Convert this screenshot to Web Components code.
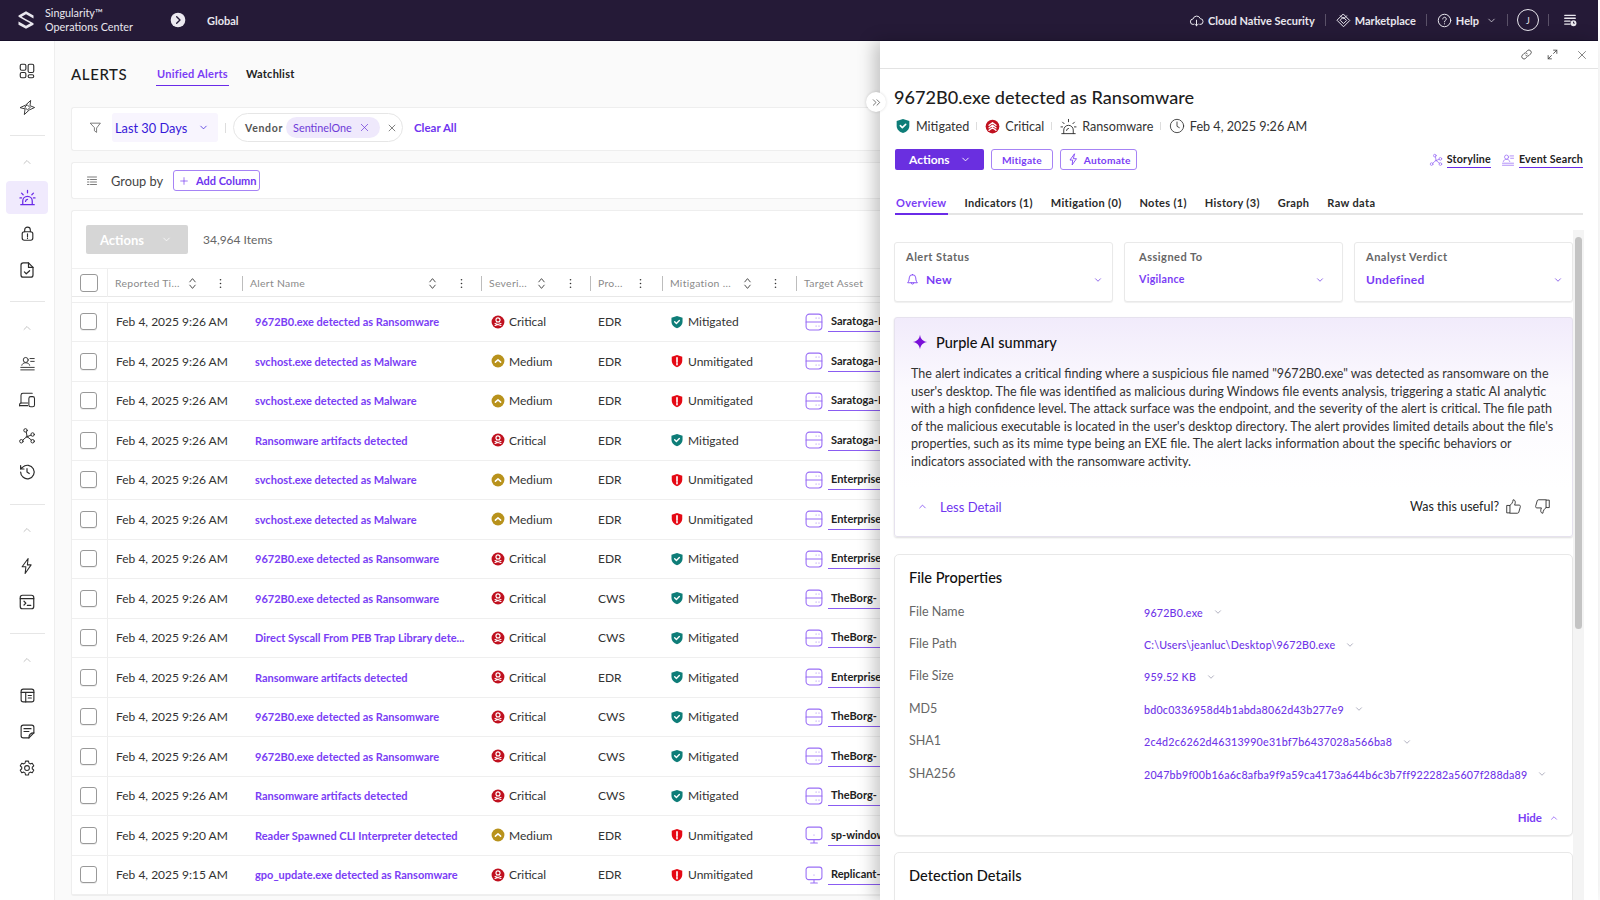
<!DOCTYPE html>
<html lang="en">
<head>
<meta charset="utf-8">
<title>Alerts</title>
<style>
    html, body { margin: 0; height: 100%; overflow: hidden; background: #fff; }
    body { font-family: Lato, "Liberation Sans", sans-serif; color: #2b2b2b; }
</style>
</head>
<body>
<app-shell></app-shell>

<script>
const ICONS = {
    logo: `<path fill="currentColor" stroke="none" d="M12 1.5 21 6.6v3.6L12 5.2 6.8 8.1 12 11l9 5v1.6l-9 5-9-5v-3.700l9 5 5.200-2.900L12 13.100 3 8.200V6.600z"/>`,
    dash: `<rect x="3" y="3" width="7.500" height="8" rx="2"/><rect x="13.500" y="3" width="7.500" height="11" rx="2"/><rect x="3" y="14" width="7.500" height="7" rx="2"/><rect x="13.500" y="17" width="7.500" height="4" rx="2"/>`,
    spark: `<path d="M2 12 9.500 8.500 16.500 2 15.500 9.500 22 12 14.500 15.500 7.500 22 8.500 14.500z"/><path d="M12 8.500 15.500 12 12 15.500 8.500 12z"/>`,
    alarm: `<path d="M3.500 21h17M6 21v-4.500a6 6 0 0 1 12 0V21"/><path d="M9.500 17a2.800 2.800 0 0 1 2.500-2.600M12 3v3M4.500 6.500 6.500 8.500M19.500 6.500 17.500 8.500M2.500 12.500h2M19.500 12.500h2"/>`,
    lock: `<rect x="4.500" y="9.500" width="15" height="12" rx="3"/><path d="M8 9.500V7a4 4 0 0 1 8 0v2.500M12 12.500v4M12 18.500v.5"/>`,
    filecheck: `<path d="M14 2.500H7a3 3 0 0 0-3 3v13a3 3 0 0 0 3 3h10a3 3 0 0 0 3-3V8.500z"/><path d="M14 2.500v6h6M8.500 14.500l2.500 2.500 4.500-4"/>`,
    events: `<circle cx="9.500" cy="7" r="3.500"/><path d="M4 14.500c.5-2.500 2.800-3.500 5.500-3.500s5 1 5.500 3.500M15.500 5h6M16.500 9h5M2.500 17.500h19M2.500 21h19"/>`,
    devices: `<path d="M4 16V5.500A2.500 2.500 0 0 1 6.500 3H19M2 19.500h11"/><path d="M2 19.500c0-2 .5-3.500 2-3.500h9"/><rect x="14.500" y="7.500" width="7.500" height="13.500" rx="2.500"/>`,
    graph: `<circle cx="10" cy="4.500" r="2.300"/><circle cx="4.500" cy="19" r="2.300"/><circle cx="19.500" cy="19" r="2.300"/><circle cx="19.500" cy="10" r="2.300"/><circle cx="12" cy="13" r="1"/><path d="M11 6.500l1 5.500M6.300 17.500 11 13.500M13 13.500l5 4M13 12.500l4.500-1.700"/>`,
    history: `<path d="M3.500 12a9 9 0 1 0 2.800-6.500L3.500 8M3.500 3.500V8H8M12 7.500V12l3 2"/>`,
    bolt: `<path d="M13.500 2 5.500 13h5l-1 9 8-11.500h-5z" stroke-linejoin="round"/>`,
    terminal: `<rect x="3" y="3" width="18" height="18" rx="3"/><path d="M3 7.500h18M8 11l2.500 2.500L8 16M12.500 16.500H17"/>`,
    panel: `<rect x="3" y="3" width="18" height="18" rx="3"/><path d="M3 7.500h18M9.500 7.500V21M13 12h4.500M13 15.500h4.500"/>`,
    note: `<path d="M21 14V6a3 3 0 0 0-3-3H6a3 3 0 0 0-3 3v12a3 3 0 0 0 3 3h8z"/><path d="M7 8h10M7 12h7M14 21c0-4 2-7 7-7"/>`,
    gear: `<circle cx="12" cy="12" r="3.200"/><path d="M10 2.800h4l.6 2.700 1.800 1 2.600-.8 2 3.400-2 1.900v2l2 1.900-2 3.400-2.600-.8-1.800 1-.6 2.700h-4l-.6-2.700-1.800-1-2.600.8-2-3.400 2-1.900v-2l-2-1.900 2-3.400 2.600.8 1.800-1z" stroke-linejoin="round"/>`,
    up: `<path d="M6 15l6-6 6 6"/>`,
    down: `<path d="M6 9l6 6 6-6"/>`,
    close: `<path d="M5 5l14 14M19 5 5 19"/>`,
    plus: `<path d="M12 4v16M4 12h16"/>`,
    funnel: `<path d="M3 4h18l-7 9v8l-4-3v-5z" stroke-linejoin="round"/>`,
    groupby: `<path d="M3 4h18M3 9h3M9 9h12M3 14h3M9 14h12M3 19h3M9 19h12"/>`,
    sort: `<path d="M7 9l5-6 5 6M7 15l5 6 5-6"/>`,
    dots: `<circle cx="12" cy="5" r="1.500" fill="currentColor" stroke="none"/><circle cx="12" cy="12" r="1.500" fill="currentColor" stroke="none"/><circle cx="12" cy="19" r="1.500" fill="currentColor" stroke="none"/>`,
    server: `<rect x="2.500" y="2.500" width="19" height="19" rx="4"/><path d="M2.500 12h19M14.500 7.200h.01M18 7.200h.01M14.500 16.800h.01M18 16.800h.01" stroke-linecap="round"/>`,
    desktop: `<rect x="2.500" y="2.500" width="19" height="15" rx="3"/><path d="M12 17.500V21M8 21.500h8M12 12h.01"/>`,
    critical: `<circle cx="12" cy="12" r="11" fill="#c0111f" stroke="none"/><path fill="none" stroke="#fff" stroke-width="2" d="M8.500 8.500a3.500 3.500 0 0 1 7 0c0 1.500-1 2.200-1 3.200h-5c0-1-1-1.700-1-3.200zM7 14.500l10 3.500M17 14.500 7 18"/>`,
    criticalUp: `<circle cx="12" cy="12" r="11" fill="#c0111f" stroke="none"/><path fill="none" stroke="#fff" stroke-width="2.200" d="M6.500 10 12 6l5.500 4M6.500 14 12 10l5.500 4M6.500 18 12 14l5.500 4"/>`,
    medium: `<circle cx="12" cy="12" r="11" fill="#b8921c" stroke="none"/><path fill="none" stroke="#fff" stroke-width="2.600" d="M7.500 14 12 10l4.500 4"/>`,
    mitigated: `<path fill="#0e7d78" stroke="none" d="M12 1.500 21.500 4.500V12c0 5-4 8.800-9.500 10.500C6.500 20.800 2.500 17 2.500 12V4.500z"/><path fill="none" stroke="#fff" stroke-width="2.400" d="M8 11.500l3 3 5-5"/>`,
    unmitigated: `<path fill="#e50914" stroke="none" d="M12 1.500 21 4.500V12c0 5-4 8.800-9 10.500C7 20.800 3 17 3 12V4.500z"/><path fill="none" stroke="#fff" stroke-width="2.800" d="M12 6.500v7.500M12 16.500v2"/>`,
    circlenext: `<circle cx="12" cy="12" r="11" fill="#ece9f0" stroke="none"/><path stroke="#241a36" stroke-width="2" d="M10 7l5 5-5 5"/>`,
    cloud: `<path d="M7 18.500a4.500 4.500 0 0 1-.5-9A6 6 0 0 1 18 9a4.500 4.500 0 0 1-.5 9.500"/><path d="M12 11.500v9M9 17.500l3 3 3-3"/>`,
    market: `<path d="M12 2 22 12 12 22 2 12z"/><path d="M12 7l5 5-5 5-5-5zM7 4.500l5 5 5-5"/>`,
    help: `<circle cx="12" cy="12" r="10"/><path d="M9.200 9.500a2.800 2.800 0 1 1 4.300 2.400c-1 .6-1.500 1.200-1.500 2.300M12 17.200v.3"/>`,
    queue: `<path stroke-width="2.400" d="M3 4h18M3 9h18M3 14h9M3 19h9"/><circle cx="18" cy="17.500" r="5" fill="currentColor" stroke="none"/><path stroke="#241a36" stroke-width="1.600" d="M18 15.500v2h1.500"/>`,
    link: `<path d="M10.500 13.500a4 4 0 0 0 6 .5l3-3a4.200 4.200 0 0 0-6-6l-1.500 1.500"/><path d="M13.500 10.500a4 4 0 0 0-6-.5l-3 3a4.200 4.200 0 0 0 6 6l1.500-1.500"/>`,
    expand: `<path d="M14 4h6v6M20 4l-6 6M10 20H4v-6M4 20l6-6"/>`,
    bell: `<path d="M12 3a6 6 0 0 0-6 6c0 6-2.500 8-3 9h18c-.5-1-3-3-3-9a6 6 0 0 0-6-6zM9.500 18a2.500 2.500 0 0 0 5 0"/>`,
    clock: `<circle cx="12" cy="12" r="10"/><path d="M12 6v6.500l3.500 2"/>`,
    ai: `<path fill="#7a10d8" stroke="none" d="M12 1c1 6.500 4.500 10 11 11-6.500 1-10 4.500-11 11-1-6.500-4.500-10-11-11 6.500-1 10-4.500 11-11z"/>`,
    thumbup: `<path d="M3 10.500h4V21H3zM7 10.500c2.500-1.500 4-4.500 4.500-8 2 0 3 1.500 3 3.500 0 1.500-.5 3-1 4h6.500c1.500 0 2 1.500 1.500 3l-2 7c-.3 1-1 1.500-2 1.500H7"/>`,
    thumbdown: `<path d="M21 13.500h-4V3h4zM17 13.500c-2.500 1.500-4 4.500-4.500 8-2 0-3-1.500-3-3.500 0-1.500.5-3 1-4H4c-1.500 0-2-1.500-1.500-3l2-7C4.800 3 5.500 2.500 6.500 2.500H17"/>`,
    chevrons: `<path d="M5 6l6 6-6 6M13 6l6 6-6 6"/>`
};

class UiIcon extends HTMLElement {
    connectedCallback() {
        const size = this.getAttribute("size") || 16;
        const sw = this.getAttribute("sw") || 1.6;
        this.attachShadow({ mode: "open" });
        this.shadowRoot.innerHTML = `
            <style>:host { display: inline-flex; flex: none; line-height: 0; } svg { display: block; }</style>
            <svg xmlns="http://www.w3.org/2000/svg" viewBox="0 0 24 24" width="${size}" height="${size}"
                fill="none" stroke="currentColor" stroke-width="${sw}" stroke-linecap="round" stroke-linejoin="round">
                ${ICONS[this.getAttribute("name")] || ""}
            </svg>`;
    }
}
customElements.define("ui-icon", UiIcon);

// small helper, every element below has a template like this
function define(name, css, html) {
    const template = document.createElement("template");
    template.innerHTML = `<style>${css}</style>${html}`;
    customElements.define(name, class extends HTMLElement {
        constructor() {
            super();
            this.attachShadow({ mode: "open" });
            this.shadowRoot.appendChild(template.content.cloneNode(true));
        }
    });
}

define("top-bar", `
    :host { display: flex; align-items: center; height: 41px; box-sizing: border-box; background: #251a37; color: #e9e7ee; font-size: 11px; border-bottom: 1px solid #17102a; padding: 0 21px 0 16px; }
    .brand { margin-left: 9px; line-height: 14px; font-size: 10.800px; width: 125px; white-space: nowrap; }
    .scope { font-weight: 700; margin-left: 21px; }
    .spacer { flex: 1; }
    .item { display: flex; align-items: center; gap: 4px; font-weight: 700; }
    .sep { width: 1px; height: 12px; background: #5a5168; margin: 0 10px; }
    .avatar { width: 20px; height: 20px; border: 1px solid #e9e7ee; border-radius: 50%; display: grid; place-items: center; font-size: 9px; }
`, `
    <ui-icon name="logo" size="20"></ui-icon>
    <div class="brand">Singularity™<br>Operations Center</div>
    <ui-icon name="circlenext" size="16"></ui-icon>
    <span class="scope">Global</span>
    <div class="spacer"></div>
    <span class="item"><ui-icon name="cloud" size="15"></ui-icon>Cloud Native Security</span>
    <i class="sep"></i>
    <span class="item"><ui-icon name="market" size="15"></ui-icon>Marketplace</span>
    <i class="sep"></i>
    <span class="item"><ui-icon name="help" size="15"></ui-icon>Help<ui-icon name="down" size="11" style="margin-left:3px"></ui-icon></span>
    <i class="sep" style="margin-left:10px;margin-right:9px"></i>
    <span class="avatar">J</span>
    <i class="sep" style="margin-right:14px;margin-left:9px"></i>
    <ui-icon name="queue" size="14" sw="1.800"></ui-icon>
`);

define("side-nav", `
    :host { display: flex; flex-direction: column; align-items: center; flex: none; width: 55px; box-sizing: border-box; background: #fff; border-right: 1px solid #eee; color: #2c2c2c; padding-top: 12px; }
    .i { height: 36.200px; flex: none; width: 42px; display: grid; place-items: center; border-radius: 4px; }
    .on { background: #f0eafd; color: #6a2be8; height: 33px; margin: 1.500px 0 1.500px; }
    hr { width: 35px; border: 0; border-top: 1px solid #e6e6e6; margin: 13.500px 0 17px; flex: none; }
    .up { color: #b5b5b5; height: 17px; margin-bottom: 9px; }
`, `
    <div class="i"><ui-icon name="dash" size="18" sw="1.500"></ui-icon></div>
    <div class="i"><ui-icon name="spark" size="17" sw="1.300"></ui-icon></div>
    <hr style="margin-top:10px">
    <div class="i up"><ui-icon name="up" size="12"></ui-icon></div>
    <div class="i on"><ui-icon name="alarm" size="19"></ui-icon></div>
    <div class="i"><ui-icon name="lock" size="17"></ui-icon></div>
    <div class="i"><ui-icon name="filecheck" size="18"></ui-icon></div>
    <hr>
    <div class="i up"><ui-icon name="up" size="12"></ui-icon></div>
    <div class="i"><ui-icon name="events" size="17" sw="1.300"></ui-icon></div>
    <div class="i"><ui-icon name="devices" size="18" sw="1.400"></ui-icon></div>
    <div class="i"><ui-icon name="graph" size="18" sw="1.300"></ui-icon></div>
    <div class="i"><ui-icon name="history" size="18"></ui-icon></div>
    <hr>
    <div class="i up"><ui-icon name="up" size="12"></ui-icon></div>
    <div class="i"><ui-icon name="bolt" size="18" sw="1.400"></ui-icon></div>
    <div class="i"><ui-icon name="terminal" size="18"></ui-icon></div>
    <hr>
    <div class="i up"><ui-icon name="up" size="12"></ui-icon></div>
    <div class="i"><ui-icon name="panel" size="17"></ui-icon></div>
    <div class="i"><ui-icon name="note" size="17"></ui-icon></div>
    <div class="i"><ui-icon name="gear" size="18" sw="1.400"></ui-icon></div>
`);

define("filter-bar", `
    :host { display: block; }
    .card { display: flex; align-items: center; background: #fff; border: 1px solid #eee; border-right: 0; box-sizing: border-box; border-radius: 3px 0 0 3px; }
    .filter { height: 44px; margin-bottom: 11px; color: #555; padding: 0 0 3px 17px; }
    .range { display: flex; align-items: center; margin-left: 10px; width: 106px; height: 29px; box-sizing: border-box; padding: 0 9px 0 3px; justify-content: space-between; background: #f8f5fe; color: #3618d8; font-size: 12.800px; border-radius: 3px; white-space: nowrap; }
    .bar { width: 1px; height: 10px; background: #ddd; margin: 0 7px; }
    .pill { display: flex; align-items: center; height: 29px; width: 170px; box-sizing: border-box; border: 1px solid #e6e6e6; border-radius: 15px; padding-left: 11px; font-size: 10.500px; }
    .pill b { color: #555; letter-spacing: .7px; font-weight: 700; }
    .chip { display: flex; align-items: center; justify-content: space-between; background: #efe9fc; color: #6e3bd8; border-radius: 11px; height: 21px; width: 94px; box-sizing: border-box; margin-left: 3px; padding: 0 10px 0 7px; font-size: 10.800px; }
    .x { color: #444; }
    .clear { margin-left: 11px; color: #6f35f0; font-size: 11.500px; font-weight: 700; }
    .group { height: 37px; margin-bottom: 11px; padding-left: 14px; color: #444; font-size: 12.800px; }
    .group span { margin-left: 13px; width: 62px; }
    .add { display: flex; align-items: center; gap: 7px; width: 87px; height: 21px; box-sizing: border-box; padding-left: 5px; border: 1px solid #a683f5; border-radius: 3px; color: #6f35f0; font-size: 11px; font-weight: 700; white-space: nowrap; }
`, `
    <div class="card filter">
        <ui-icon name="funnel" size="13" sw="1.400"></ui-icon>
        <div class="range">Last 30 Days <ui-icon name="down" size="11"></ui-icon></div>
        <i class="bar"></i>
        <div class="pill"><b>Vendor</b>
            <div class="chip">SentinelOne <ui-icon name="close" size="11"></ui-icon></div>
            <ui-icon class="x" name="close" size="10" style="margin-left:7px"></ui-icon>
        </div>
        <span class="clear">Clear All</span>
    </div>
    <div class="card group">
        <ui-icon name="groupby" size="12" sw="1.400"></ui-icon>
        <span>Group by</span>
        <div class="add"><ui-icon name="plus" size="10"></ui-icon>Add Column</div>
    </div>
`);

const COLS = "36px 134px 239px 109px 72px 134px 240px";

define("alert-header", `
    :host { display: grid; grid-template-columns: ${COLS}; height: 29px; box-sizing: border-box; border-top: 1px solid #f0f0f0; border-bottom: 1px solid #e8e8e8; align-items: center; color: #8a8a8a; font-size: 10.400px; letter-spacing: .3px; }
    .c { display: flex; align-items: center; border-left: 1px solid #bdbdbd; height: 15px; padding-left: 7px; position: relative; white-space: nowrap; }
    .c ui-icon { position: absolute; color: #333; }
    .box { height: 28px; border-right: 1px solid #eee; display: flex; align-items: center; padding-left: 8px; }
    .box i { width: 16px; height: 16px; border: 1px solid #999; border-radius: 3px; background: #fff; }
`, `
    <div class="box"><i></i></div>
    <div class="c" style="border:0">Reported Ti...<ui-icon name="sort" size="13" style="left:78px"></ui-icon><ui-icon name="dots" size="13" style="left:106px"></ui-icon></div>
    <div class="c">Alert Name<ui-icon name="sort" size="13" style="left:183px"></ui-icon><ui-icon name="dots" size="13" style="left:212px"></ui-icon></div>
    <div class="c">Severi...<ui-icon name="sort" size="13" style="left:53px"></ui-icon><ui-icon name="dots" size="13" style="left:82px"></ui-icon></div>
    <div class="c">Pro...<ui-icon name="dots" size="13" style="left:43px"></ui-icon></div>
    <div class="c">Mitigation ...<ui-icon name="sort" size="13" style="left:78px"></ui-icon><ui-icon name="dots" size="13" style="left:106px"></ui-icon></div>
    <div class="c">Target Asset</div>
`);

const SEVERITY = { Critical: "critical", Medium: "medium" };
const MITIGATION = { Mitigated: "mitigated", Unmitigated: "unmitigated" };

class AlertRow extends HTMLElement {
    connectedCallback() {
        const a = name => this.getAttribute(name);
        this.attachShadow({ mode: "open" });
        this.shadowRoot.innerHTML = `
            <style>
            :host { display: grid; grid-template-columns: ${COLS}; height: 39.500px; box-sizing: border-box; border-bottom: 1.500px solid #efefef; align-items: center; font-size: 12px; color: #333; }
            .box { height: 100%; border-right: 1px solid #eee; display: flex; align-items: center; padding-left: 8px; }
            .box i { width: 17px; height: 17px; box-sizing: border-box; border: 1px solid #999; border-radius: 3px; background: #fff; box-shadow: 0 1px 0 #eee; }
            .t { padding-left: 8px; }
            a { padding-left: 13px; color: #7a3df5; font-size: 11px; font-weight: 700; white-space: nowrap; }
            .s, .m { display: flex; align-items: center; gap: 4px; padding-left: 10px; }
            .m { padding-left: 8px; }
            .p { padding-left: 8px; }
            .asset { display: flex; align-items: center; gap: 4px; padding-left: 8px; color: #9a6ff6; }
            .asset span { color: #222; font-size: 11px; font-weight: 700; border-bottom: 1px solid #8a5cf2; padding: 3px 40px 4px 3px; white-space: nowrap; }
            </style>
            <div class="box"><i></i></div>
            <div class="t">${a("time")}</div>
            <a>${a("name")}</a>
            <div class="s"><ui-icon name="${SEVERITY[a("sev")]}" size="14"></ui-icon>${a("sev")}</div>
            <div class="p">${a("prod")}</div>
            <div class="m"><ui-icon name="${MITIGATION[a("mit")]}" size="14"></ui-icon>${a("mit")}</div>
            <div class="asset"><ui-icon name="${a("kind") || "server"}" size="20" sw="1.300"></ui-icon><span>${a("asset")}</span></div>`;
    }
}
customElements.define("alert-row", AlertRow);

define("alert-table", `
    :host { display: block; background: #fff; border: 1px solid #eee; border-right: 0; border-radius: 3px 0 0 3px; box-sizing: border-box; }
    .tools { display: flex; align-items: center; height: 57px; padding: 0 0 0 14px; font-size: 12px; color: #666; }
    .btn { display: flex; align-items: center; justify-content: space-between; width: 102px; height: 29px; padding: 0 16px 0 14px; box-sizing: border-box; background: #d6d6d6; color: #fff; font-size: 13px; font-weight: 700; border-radius: 2px; margin-right: 15px; }
    .gap { height: 4.500px; border-bottom: 1px solid #eee; }
`, `
    <div class="tools"><div class="btn">Actions <ui-icon name="down" size="11"></ui-icon></div>34,964 Items</div>
    <alert-header></alert-header>
    <div class="gap"></div>
    <slot></slot>
`);

define("alerts-view", `
    :host { display: block; flex: 1; min-width: 0; overflow: hidden; background: #fafafa; padding: 0 0 0 16px; }
    .title { display: flex; align-items: center; height: 66px; }
    h1 { margin: 0 30px 0 0; font-size: 15px; font-weight: 500; letter-spacing: .6px; color: #1c1c1c; width: 55px; white-space: nowrap; }
    .tab { font-size: 11px; font-weight: 700; letter-spacing: .25px; padding: 0 1px 5px; margin-right: 16px; color: #222; border-bottom: 1px solid transparent; margin-top: 5px; }
    .on { color: #7a3df5; border-bottom-color: #6a2be8; }
`, `
    <div class="title"><h1>ALERTS</h1><span class="tab on">Unified Alerts</span><span class="tab">Watchlist</span></div>
    <filter-bar></filter-bar>
    <alert-table><slot></slot></alert-table>
`);

class SelectCard extends HTMLElement {
    connectedCallback() {
        const icon = this.getAttribute("icon");
        const small = this.hasAttribute("small");
        this.attachShadow({ mode: "open" });
        this.shadowRoot.innerHTML = `
            <style>
            :host { display: block; position: relative; height: 60px; box-sizing: border-box; border: 1px solid #e9e9e9; border-radius: 3px; box-shadow: 0 1px 1px #f0f0f0; padding: 7px 14px 0 ${small ? 14 : 11}px; background: #fff; }
            .l { color: #666; font-size: 11px; font-weight: 700; letter-spacing: .5px; line-height: 14px; }
            .v { display: flex; align-items: center; gap: 7px; height: 18px; margin-top: 6px; color: #7a3df5; font-weight: 700; letter-spacing: .3px; font-size: ${small ? 10.6 : 12}px; }
            .c { position: absolute; right: ${small ? 17 : 9}px; bottom: 16px; color: #5a1fe0; }
            </style>
            <div class="l">${this.getAttribute("label")}</div>
            <div class="v">${icon ? `<ui-icon name="${icon}" size="13"></ui-icon>` : ""}${this.getAttribute("value")}</div>
            <ui-icon class="c" name="down" size="10"></ui-icon>`;
    }
}
customElements.define("select-card", SelectCard);

class PropRow extends HTMLElement {
    connectedCallback() {
        this.attachShadow({ mode: "open" });
        this.shadowRoot.innerHTML = `
            <style>
            :host { display: grid; grid-template-columns: 235px 1fr; align-items: center; height: 32.400px; font-size: 12.500px; color: #666; }
            .v { display: flex; align-items: center; gap: 10px; color: #6f35e8; font-size: 10.700px; letter-spacing: .2px; font-weight: 500; padding-top: 2px; white-space: nowrap; }
            ui-icon { color: #8a8aa0; }
            </style>
            <div>${this.getAttribute("label")}</div>
            <div class="v">${this.getAttribute("value")}<ui-icon name="down" size="10"></ui-icon></div>`;
    }
}
customElements.define("prop-row", PropRow);

define("info-card", `
    :host { display: block; box-sizing: border-box; border: 1px solid #e8e8e8; border-radius: 5px; padding: 13px 14px; background: #fff; box-shadow: 0 1px 1px #eee; }
    h3 { margin: 0; font-size: 14.600px; font-weight: 500; color: #111; line-height: 20px; }
`, `<h3><slot name="title"></slot></h3><slot></slot>`);

define("ai-summary", `
    :host { display: block; height: 220px; box-sizing: border-box; border: 1px solid #e6e2ee; border-radius: 3px; padding: 14px 16px 0 16px; background: linear-gradient(#f1ebfb 0, #fbf9fe 70px, #fff 170px); box-shadow: 0 1px 2px #ddd; }
    .t { display: flex; align-items: center; gap: 8px; font-size: 14.500px; font-weight: 500; color: #111; height: 20px; margin-left: 1px; }
    p { margin: 13px 0 0; font-size: 12.550px; line-height: 17.500px; color: #333; width: 650px; }
    .f { display: flex; align-items: center; margin: 28px 5px 0 6px; font-size: 12.500px; color: #222; }
    .less { display: flex; align-items: center; gap: 12px; color: #6f35f0; flex: 1; font-size: 13px; }
    .th { margin-left: 6px; }
`, `
    <div class="t"><ui-icon name="ai" size="16"></ui-icon>Purple AI summary</div>
    <p>The alert indicates a critical finding where a suspicious file named "9672B0.exe" was detected as ransomware on the user's desktop. The file was identified as malicious during Windows file events analysis, triggering a static AI analytic with a high confidence level. The attack surface was the endpoint, and the severity of the alert is critical. The file path of the malicious executable is located in the user's desktop directory. The alert provides limited details about the file's properties, such as its mime type being an EXE file. The alert lacks information about the specific behaviors or indicators associated with the ransomware activity.</p>
    <div class="f">
        <span class="less"><ui-icon name="up" size="11"></ui-icon>Less Detail</span>
        Was this useful?<ui-icon class="th" name="thumbup" size="17" sw="1.200"></ui-icon><ui-icon name="thumbdown" size="17" sw="1.200" style="margin-left:12px"></ui-icon>
    </div>
`);

define("detail-panel", `
    :host { display: flex; flex-direction: column; flex: none; width: 718px; height: 100%; position: relative; background: #fff; box-shadow: -6px 0 16px rgba(0,0,0,.22); font-size: 12.500px; color: #333; overflow: visible; }
    .bar { display: flex; justify-content: flex-end; align-items: center; gap: 13px; height: 28px; flex: none; box-sizing: border-box; border-bottom: 1px solid #e3e3e3; padding-right: 10px; color: #444; }
    .collapse { position: absolute; left: -14px; top: 51px; width: 20px; height: 20px; border-radius: 50%; background: #fff; display: grid; place-items: center; color: #444; box-shadow: 0 0 3px rgba(0,0,0,.15); }
    .head { flex: none; padding: 16px 15px 0 15px; }
    h2 { margin: 0 0 0 -1px; font-size: 18.100px; font-weight: 500; line-height: 24px; color: #1d1d1d; }
    .meta { display: flex; align-items: center; height: 18px; margin-top: 8px; font-size: 12.600px; color: #333; }
    .meta span { display: flex; align-items: center; gap: 5px; }
    .meta span.alarm { gap: 4px; }
    .meta i { width: 1px; height: 8px; background: #ddd; margin: 0 7px; }
    .acts { display: flex; align-items: center; gap: 7px; margin-top: 14px; height: 21px; }
    .primary { display: flex; align-items: center; justify-content: space-between; width: 89px; height: 21px; box-sizing: border-box; padding: 0 13px 0 14px; background: #6a2fe0; color: #fff; font-size: 12px; font-weight: 700; border-radius: 2px; }
    .btn { display: flex; align-items: center; gap: 4px; height: 21px; box-sizing: border-box; padding: 0 10px; border: 1px solid #a683f5; border-radius: 3px; color: #7a3df5; font-size: 10.200px; font-weight: 700; letter-spacing: .2px; }
    .right { margin-left: auto; display: flex; gap: 4px; align-items: center; color: #222; font-size: 10.700px; font-weight: 700; letter-spacing: .2px; }
    .right u { text-decoration: none; border-bottom: 1px solid #6a2be8; padding-bottom: 2px; }
    .right ui-icon { color: #9a6ff6; }
    .tabs { display: flex; gap: 15.900px; margin-top: 25px; height: 20px; box-sizing: border-box; border-bottom: 2px solid #e5e5e5; font-size: 11px; font-weight: 700; letter-spacing: .35px; color: #2a2a2a; line-height: 16px; }
    .tabs span { height: 20px; box-sizing: border-box; padding: 0 1px; }
    .tabs .on { color: #7a3df5; border-bottom: 2px solid #6a2be8; }
    .body { flex: 1; min-height: 0; display: flex; overflow: hidden; margin-top: 15px; }
    .scroll { width: 693px; flex: none; box-sizing: border-box; padding: 12px 0 0 14px; display: flex; flex-direction: column; }
    .scroll > * { flex: none; }
    .track { width: 11px; background: #f4f4f4; position: relative; flex: none; }
    .thumb { position: absolute; left: 2px; right: 2px; top: 7px; height: 392px; border-radius: 4px; background: #c4c4c4; }
    .sel { display: grid; grid-template-columns: repeat(3, 219px); gap: 11px; }
    ai-summary { margin-top: 15px; }
    .file { height: 282px; margin-top: 17px; position: relative; }
    .rows { margin-top: 7px; }
    .hide { position: absolute; right: 13px; bottom: 11px; display: flex; align-items: center; gap: 7px; color: #7a3df5; font-size: 11.500px; font-weight: 700; }
    .detect { margin-top: 16px; height: 120px; }
`, `
    <div class="bar">
        <ui-icon name="link" size="13"></ui-icon><ui-icon name="expand" size="13"></ui-icon><ui-icon name="close" size="12" sw="1.300" style="margin-left:4px"></ui-icon>
    </div>
    <div class="collapse"><ui-icon name="chevrons" size="11"></ui-icon></div>
    <div class="head">
        <h2>9672B0.exe detected as Ransomware</h2>
        <div class="meta">
            <span><ui-icon name="mitigated" size="16"></ui-icon>Mitigated</span><i style="margin-right:8px"></i>
            <span><ui-icon name="criticalUp" size="15"></ui-icon>Critical</span><i></i>
            <span class="alarm"><ui-icon name="alarm" size="19" sw="1.200"></ui-icon>Ransomware</span><i style="margin-right:7.500px"></i>
            <span><ui-icon name="clock" size="16" sw="1.300"></ui-icon>Feb 4, 2025 9:26 AM</span>
        </div>
        <div class="acts">
            <div class="primary">Actions <ui-icon name="down" size="11" sw="2"></ui-icon></div>
            <div class="btn">Mitigate</div>
            <div class="btn" style="padding:0 5px 0 6px"><ui-icon name="bolt" size="13"></ui-icon>Automate</div>
            <div class="right">
                <ui-icon name="graph" size="14" sw="1.300"></ui-icon><u>Storyline</u>
                <ui-icon name="events" size="14" sw="1.300" style="margin-left:6px"></ui-icon><u>Event Search</u>
            </div>
        </div>
        <div class="tabs">
            <span class="on">Overview</span><span>Indicators (1)</span><span>Mitigation (0)</span><span>Notes (1)</span><span>History (3)</span><span>Graph</span><span>Raw data</span>
        </div>
    </div>
    <div class="body">
        <div class="scroll">
            <div class="sel">
                <select-card label="Alert Status" value="New" icon="bell"></select-card>
                <select-card label="Assigned To" value="Vigilance" small></select-card>
                <select-card label="Analyst Verdict" value="Undefined"></select-card>
            </div>
            <ai-summary></ai-summary>
            <info-card class="file">
                <span slot="title">File Properties</span>
                <div class="rows">
                    <prop-row label="File Name" value="9672B0.exe"></prop-row>
                    <prop-row label="File Path" value="C:\\Users\\jeanluc\\Desktop\\9672B0.exe"></prop-row>
                    <prop-row label="File Size" value="959.52 KB"></prop-row>
                    <prop-row label="MD5" value="bd0c0336958d4b1abda8062d43b277e9"></prop-row>
                    <prop-row label="SHA1" value="2c4d2c6262d46313990e31bf7b6437028a566ba8"></prop-row>
                    <prop-row label="SHA256" value="2047bb9f00b16a6c8afba9f9a59ca4173a644b6c3b7ff922282a5607f288da89"></prop-row>
                </div>
                <div class="hide">Hide <ui-icon name="up" size="10"></ui-icon></div>
            </info-card>
            <info-card class="detect"><span slot="title">Detection Details</span></info-card>
        </div>
        <div class="track"><div class="thumb"></div></div>
    </div>
`);

const ROWS = [
    ["Feb 4, 2025 9:26 AM", "9672B0.exe detected as Ransomware", "Critical", "EDR", "Mitigated", "Saratoga-I"],
    ["Feb 4, 2025 9:26 AM", "svchost.exe detected as Malware", "Medium", "EDR", "Unmitigated", "Saratoga-I"],
    ["Feb 4, 2025 9:26 AM", "svchost.exe detected as Malware", "Medium", "EDR", "Unmitigated", "Saratoga-I"],
    ["Feb 4, 2025 9:26 AM", "Ransomware artifacts detected", "Critical", "EDR", "Mitigated", "Saratoga-I"],
    ["Feb 4, 2025 9:26 AM", "svchost.exe detected as Malware", "Medium", "EDR", "Unmitigated", "Enterprise"],
    ["Feb 4, 2025 9:26 AM", "svchost.exe detected as Malware", "Medium", "EDR", "Unmitigated", "Enterprise"],
    ["Feb 4, 2025 9:26 AM", "9672B0.exe detected as Ransomware", "Critical", "EDR", "Mitigated", "Enterprise"],
    ["Feb 4, 2025 9:26 AM", "9672B0.exe detected as Ransomware", "Critical", "CWS", "Mitigated", "TheBorg-"],
    ["Feb 4, 2025 9:26 AM", "Direct Syscall From PEB Trap Library dete...", "Critical", "CWS", "Mitigated", "TheBorg-"],
    ["Feb 4, 2025 9:26 AM", "Ransomware artifacts detected", "Critical", "EDR", "Mitigated", "Enterprise"],
    ["Feb 4, 2025 9:26 AM", "9672B0.exe detected as Ransomware", "Critical", "CWS", "Mitigated", "TheBorg-"],
    ["Feb 4, 2025 9:26 AM", "9672B0.exe detected as Ransomware", "Critical", "CWS", "Mitigated", "TheBorg-"],
    ["Feb 4, 2025 9:26 AM", "Ransomware artifacts detected", "Critical", "CWS", "Mitigated", "TheBorg-"],
    ["Feb 4, 2025 9:20 AM", "Reader Spawned CLI Interpreter detected", "Medium", "EDR", "Unmitigated", "sp-window", "desktop"],
    ["Feb 4, 2025 9:15 AM", "gpo_update.exe detected as Ransomware", "Critical", "EDR", "Unmitigated", "Replicant-", "desktop"]
];

class AppShell extends HTMLElement {
    constructor() {
        super();
        this.attachShadow({ mode: "open" });
        this.shadowRoot.innerHTML = `
            <style>
            :host { display: flex; flex-direction: column; height: 900px; width: 1598px; }
            .main { flex: 1; min-height: 0; display: flex; }
            </style>
            <top-bar></top-bar>
            <div class="main">
                <side-nav></side-nav>
                <alerts-view></alerts-view>
                <detail-panel></detail-panel>
            </div>`;
        const view = this.shadowRoot.querySelector("alerts-view");
        for(const [time, name, sev, prod, mit, asset, kind] of ROWS) {
            const row = document.createElement("alert-row");
            Object.entries({ time, name, sev, prod, mit, asset }).forEach(([k, v]) => row.setAttribute(k, v));
            if(kind) row.setAttribute("kind", kind);
            view.appendChild(row);
        }
    }
}
customElements.define("app-shell", AppShell);
</script>
</body>
</html>
